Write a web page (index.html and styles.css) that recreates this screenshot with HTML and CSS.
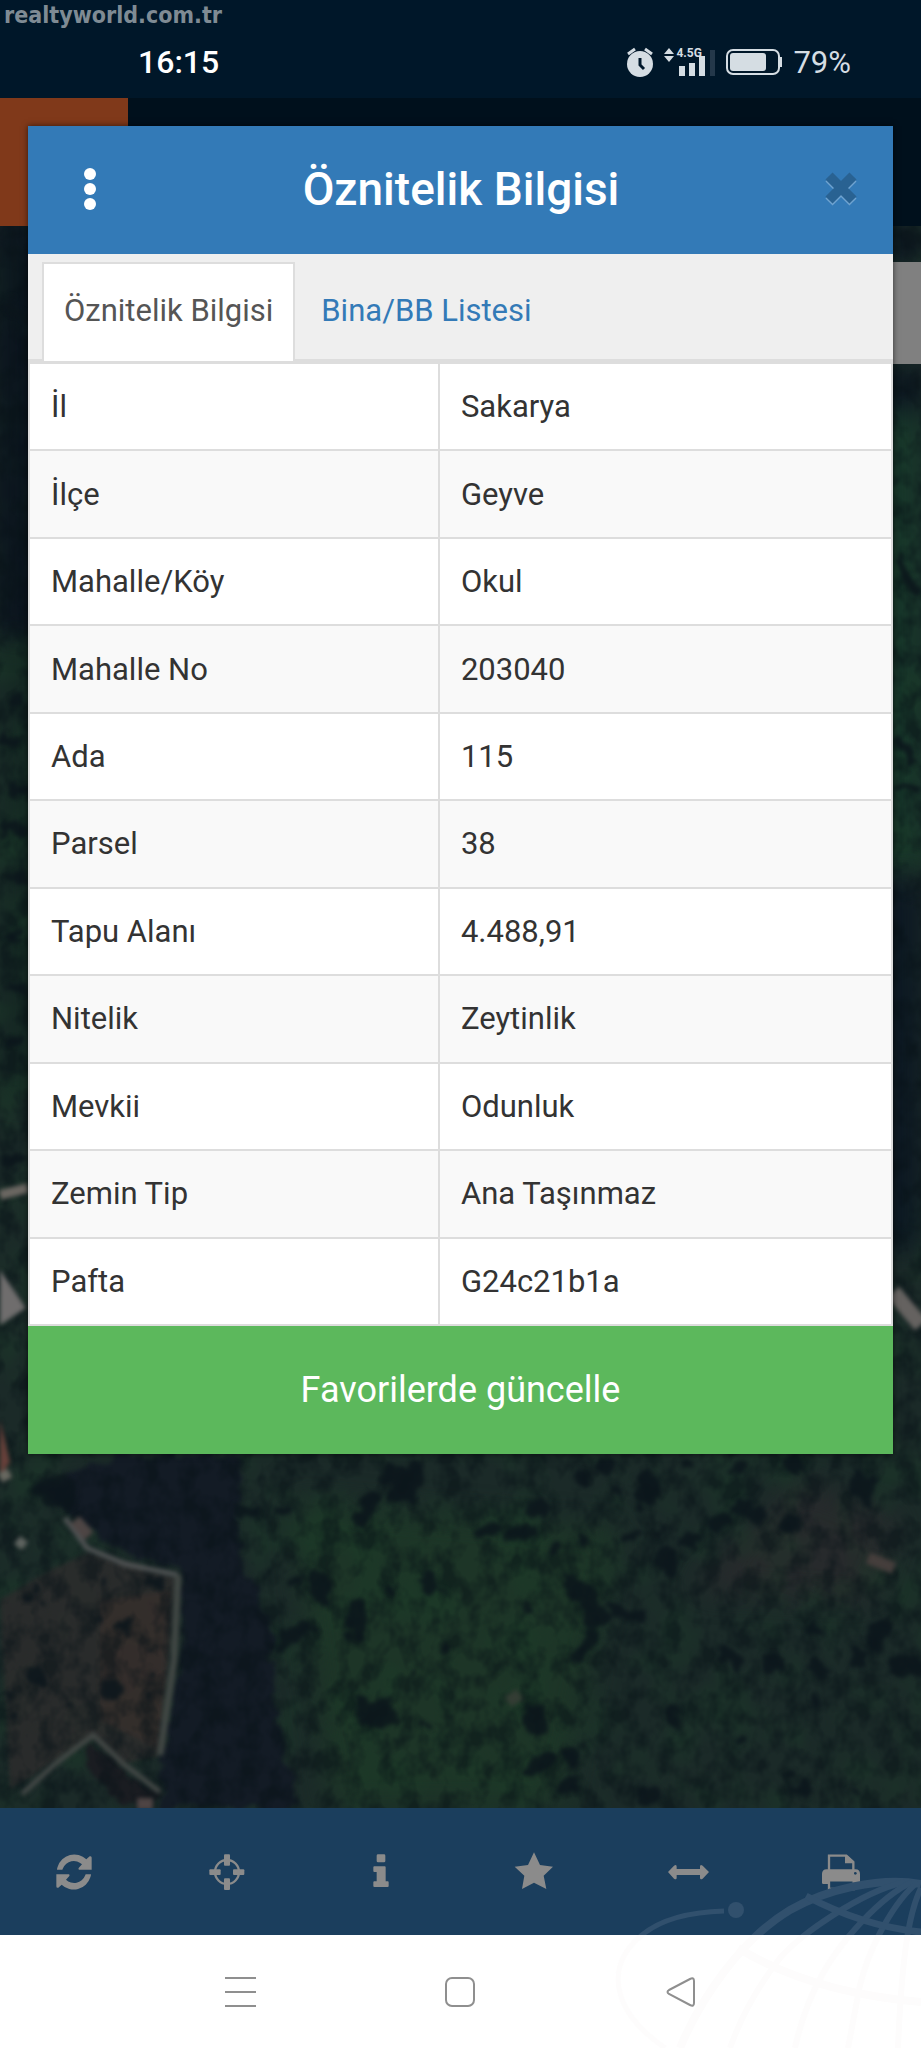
FILE: index.html
```html
<!DOCTYPE html>
<html lang="tr">
<head>
  <meta charset="UTF-8" />
  <meta name="viewport" content="width=device-width, initial-scale=1" />
  <title>Öznitelik Bilgisi</title>
  <link rel="stylesheet" href="styles.css">
</head>
<body>
  <div class="durum">
    <span class="site">realtyworld.com.tr</span>
    <span class="saat">16:15</span>
    <div class="durum-sag">
      <svg width="28" height="30" viewBox="0 0 28 30">
        <circle cx="14" cy="17" r="13" fill="#d5dde3"/>
        <path d="M2 7l7-5M26 7l-7-5" stroke="#d5dde3" stroke-width="3"/>
        <path d="M14 11v7l4 4" fill="none" stroke="#00182b" stroke-width="3"/>
      </svg>
      <div class="sinyal">
        <svg width="52" height="28" viewBox="0 0 52 28">
          <path d="M0 6l5-6 5 6zM0 8l5 6 5-6z" fill="#d5dde3"/>
          <path d="M15 18h6v10h-6zM25 15h6v13h-6zM35 8h6v20h-6z" fill="#d5dde3"/>
          <path d="M46 2h5v26h-5z" fill="#24384a"/>
        </svg>
        <span class="sebeke">4.5G</span>
      </div>
      <svg width="57" height="28" viewBox="0 0 57 28">
        <rect x="1" y="2" width="52" height="24" rx="6" fill="none" stroke="#d5dde3" stroke-width="2"/>
        <rect x="4" y="5" width="36" height="18" rx="3" fill="#d5dde3"/>
        <path d="M54 9h2v10h-2z" fill="#d5dde3"/>
      </svg>
      <span class="pil">79%</span>
    </div>
  </div>

  <main class="harita">
    <svg class="uydu" viewBox="0 98 921 1710" preserveAspectRatio="xMidYMid slice" color-interpolation-filters="sRGB">
      <defs>
        <filter id="doku" x="0" y="0" width="100%" height="100%">
          <feTurbulence type="fractalNoise" baseFrequency="0.05 0.04" numOctaves="3" seed="8"/>
          <feColorMatrix values="0 0 0 0 0.03  0 0 0 0 0.07  0 0 0 0 0.09  3 0 0 0 -1.2"/>
        </filter>
        <filter id="isik" x="0" y="0" width="100%" height="100%">
          <feTurbulence type="fractalNoise" baseFrequency="0.02 0.016" numOctaves="3" seed="21"/>
          <feColorMatrix values="0 0 0 0 0.11  0 0 0 0 0.24  0 0 0 0 0.16  0 2.4 0 0 -1"/>
        </filter>
        <filter id="yumusak"><feGaussianBlur stdDeviation="2"/></filter>
        <filter id="agac">
          <feTurbulence type="fractalNoise" baseFrequency="0.06" numOctaves="2" seed="4" result="n"/>
          <feDisplacementMap in="SourceGraphic" in2="n" scale="22" xChannelSelector="R" yChannelSelector="G"/>
          <feGaussianBlur stdDeviation="2"/>
        </filter>
        <filter id="genis"><feGaussianBlur stdDeviation="14"/></filter>
      </defs>
      <rect y="98" width="921" height="1710" fill="#1b2a28"/>
      <g filter="url(#genis)">
        <path d="M0 226H60V630H0zM870 226H921V262H870zM880 364H921V410H880z" fill="#0b1420"/>
        <path d="M0 630H50V1100H0z" fill="#152823"/>
        <path d="M880 410H921V870H880z" fill="#17382a"/>
        <path d="M290 1500L620 1530 560 1808H330z" fill="#1d3527"/>
        <path d="M800 1480L900 1520 870 1600 690 1590z" fill="#272a2c"/>
      </g>
      <rect y="98" width="921" height="1710" filter="url(#isik)" opacity="0.45"/>
      <g filter="url(#genis)">
        <path d="M0 200H28V640H0z" fill="#0b141d"/>
        <path d="M880 880H921V1250H880z" fill="#0c1722"/>
      </g>
      <g filter="url(#yumusak)">
        <path d="M50 1570L90 1552 178 1578 160 1755 120 1765 93 1737 10 1790 0 1600z" fill="#2b2c2b" opacity="0.85"/>
        <path d="M100 1600L170 1590 160 1750 100 1720z" fill="#372f2c" opacity="0.7"/>
      </g>
      <g filter="url(#agac)">
        <path d="M40 1490L120 1454H240L238 1550 270 1620 275 1700 298 1808H160L162 1755 182 1640 182 1570 130 1555 90 1530z" fill="#131b25"/>
        <path d="M90 1744L160 1800 125 1808 85 1760z" fill="#1a1c21"/>
      </g>
      <rect y="98" width="921" height="1710" filter="url(#doku)" opacity="0.5"/>
      <g class="agaclar" filter="url(#agac)" fill="none" stroke="#0b151b" stroke-linecap="round" opacity="0.85">
        <path stroke-width="8" d="M35 1587h0M29 1597h0M42 1603h0M107 1584h0M98 1621h0M152 1652h0M149 1674h0M148 1696h0M67 1707h0M12 1714h0M5 1693h0M140 1757h0M412 1675h0M445 1650h0M424 1724h0M530 1609h0M617 1492h0M661 1528h0M815 1703h0M743 1741h0M787 1775h0M853 1795h0"/>
        <path stroke-width="14" d="M155 1582h0M124 1624h0M296 1580h0M392 1595h0M360 1625h0M240 1510h8M285 1508h0M555 1545h0M582 1542h0M632 1538h0M592 1632l-12 25M813 1630h0M814 1699h0M795 1790h12M562 1784h10M642 1797h8M688 1465h0M740 1467h0M790 1463h6M728 1655l10 6M673 1715v6M528 1770l22-10M360 1620l-4 12M615 1610l20 6"/>
        <path stroke-width="20" d="M38 1677h0M109 1690h6M320 1580v14M432 1583h-4M356 1610v16M305 1630l-20 12M489 1530h0M515 1532h10M537 1510h0M580 1480h0M605 1468h0M648 1482l-3 16M667 1554l-2 8M692 1542h0M717 1524h4M744 1508l14 6M790 1524h2M858 1478l8 16M573 1582l14 20M596 1615h2M770 1664h6M818 1668h0M856 1659h4M900 1665h14M880 1630l-4 12M530 1712l8 16M570 1755h4M370 1500l-6 14M390 1478l20-4"/>
        <path stroke-width="32" d="M370 1714h12M404 1488l8-10M60 1496l-8-6"/>
        <path stroke-width="10" d="M8 300l18 20M12 700h10M4 740h14M14 790h8M6 830h12M18 880h6M8 935h14M12 990h10M8 1040h12M4 1160h14M900 560l12 30M900 740l12 20M900 790h10"/>
      </g>
      <g filter="url(#yumusak)" fill="none" stroke="#4f5253" stroke-width="5">
        <path d="M65 1518L87 1548 125 1564 178 1575"/>
        <path d="M178 1575L174 1660 160 1755" stroke-width="7" stroke="#414744"/>
        <path d="M22 1794L55 1764 93 1735 125 1765 160 1792" stroke="#434846"/>
        <path d="M75 1520l14 16" stroke-width="12" stroke="#4d4544"/>
        <path d="M0 1195L28 1188" stroke-width="10" stroke="#6b6762"/>
        <path d="M893 1292L921 1325" stroke-width="16" stroke="#656260"/>
        <path d="M0 1270L26 1308 0 1325z" fill="#6f6d6d" stroke="none"/>
        <path d="M0 1420L10 1462 0 1476z" fill="#67403a" stroke="none"/>
        <path d="M0 1478l10-5" stroke-width="10" stroke="#686860"/>
        <path d="M17 1540l8 6" stroke-width="10" stroke="#5f6460"/>
        <path d="M868 1558l26 10" stroke-width="12" stroke="#453e3c"/>
        <path d="M508 1702l12-8" stroke-width="12" stroke="#343d34"/>
        <path d="M137 1804h16" stroke-width="12" stroke="#4e4444"/>
      </g>
    </svg>
    <div class="ust-serit"></div>
    <div class="yan-kutu"></div>

    <section class="pencere">
      <header class="baslik">
        <button class="menu" aria-label="Menü">
          <svg width="14" height="44" viewBox="0 0 14 44" fill="#fff">
            <circle cx="7" cy="7" r="6"/><circle cx="7" cy="22" r="6"/><circle cx="7" cy="37" r="6"/>
          </svg>
        </button>
        <h1>Öznitelik Bilgisi</h1>
        <button class="kapat" aria-label="Kapat">
          <svg width="32" height="34" viewBox="0 0 32 34" fill="none" stroke-width="10">
            <path d="M4 6l24 24M28 6L4 30" stroke="#6fa3d0"/>
            <path d="M4 4l24 24M28 4L4 28" stroke="#296292"/>
          </svg>
        </button>
      </header>
      <nav class="sekmeler">
        <a href="#bilgi" class="sekme aktif">Öznitelik Bilgisi</a>
        <a href="#liste" class="sekme">Bina/BB Listesi</a>
      </nav>
      <table class="bilgi" id="bilgi">
        <tr><td>İl</td><td>Sakarya</td></tr>
        <tr><td>İlçe</td><td>Geyve</td></tr>
        <tr><td>Mahalle/Köy</td><td>Okul</td></tr>
        <tr><td>Mahalle No</td><td>203040</td></tr>
        <tr><td>Ada</td><td>115</td></tr>
        <tr><td>Parsel</td><td>38</td></tr>
        <tr><td>Tapu Alanı</td><td>4.488,91</td></tr>
        <tr><td>Nitelik</td><td>Zeytinlik</td></tr>
        <tr><td>Mevkii</td><td>Odunluk</td></tr>
        <tr><td>Zemin Tip</td><td>Ana Taşınmaz</td></tr>
        <tr><td>Pafta</td><td>G24c21b1a</td></tr>
      </table>
      <button class="favori">Favorilerde güncelle</button>
    </section>
  </main>

  <footer class="alt">
    <div class="araclar">
      <button aria-label="Yenile">
        <svg viewBox="160 180 126 126">
          <path id="ok" d="M172 236Q172 232 174 227A52 52 0 0 1 260 205L270 196Q276 194 276 200V236H238Q235 234 237 231L247 220A35 35 0 0 0 190 232L188 236Z"/>
          <use href="#ok" transform="rotate(180 223 243)"/>
        </svg>
      </button>
      <button aria-label="Konum">
        <svg viewBox="621 180 126 126">
          <circle cx="684" cy="243" r="36" fill="none" stroke="#8b8b8b" stroke-width="7"/>
          <rect x="675" y="190" width="18" height="34" rx="3"/>
          <rect x="675" y="262" width="18" height="35" rx="3"/>
          <rect x="631" y="235" width="34" height="17" rx="3"/>
          <rect x="702" y="235" width="34" height="17" rx="3"/>
        </svg>
      </button>
      <button aria-label="Bilgi">
        <svg viewBox="1081 180 126 126">
          <rect x="1131" y="190" width="26" height="24" rx="4"/>
          <path d="M1124 226H1155Q1158 226 1158 229V271H1164Q1167 271 1167 274V285Q1167 288 1164 288H1124Q1121 288 1121 285V274Q1121 271 1124 271H1131V243H1124Q1121 243 1121 240V229Q1121 226 1124 226Z"/>
        </svg>
      </button>
      <button aria-label="Favoriler">
        <svg viewBox="161 180 126 126">
          <path d="M224 184L242 222 281 227 253 254 261 294 224 275 188 294 195 254 166 227 206 222Z"/>
        </svg>
      </button>
      <button aria-label="Ölçüm">
        <svg viewBox="621 180 126 126">
          <path d="M624 243L642 224Q650 219 650 227V234H720V227Q720 219 728 224L747 243 728 263Q720 268 720 260V252H650V260Q650 268 642 263Z"/>
        </svg>
      </button>
      <button aria-label="Yazdır">
        <svg viewBox="1083 180 126 126">
          <path d="M1110 238V194H1162L1183 213V238M1110 268H1184V294H1110Z" fill="none" stroke="#8b8b8b" stroke-width="7"/>
          <path d="M1158 194V217H1183V210L1166 194Z"/>
          <path d="M1089 275V249Q1089 235 1103 235H1190Q1203 235 1203 249V275Q1203 279 1199 279H1184V270H1108V279H1093Q1089 279 1089 275Z"/>
          <circle cx="1189" cy="247" r="4" fill="#1b3e5d"/>
        </svg>
      </button>
    </div>
    <div class="telefon">
      <button aria-label="Son uygulamalar">
        <svg width="32" height="32" viewBox="0 0 32 32"><path d="M1 2h31M1 16h31M1 30h31"/></svg>
      </button>
      <button aria-label="Ana ekran">
        <svg width="32" height="32" viewBox="0 0 32 32"><rect x="2" y="2" width="28" height="28" rx="6"/></svg>
      </button>
      <button aria-label="Geri">
        <svg width="32" height="32" viewBox="0 0 32 32"><path d="M4 14L25 3Q29 1 29 5V27Q29 31 25 29L4 18Q1 16 4 14Z"/></svg>
      </button>
    </div>
    <svg class="kure" width="321" height="178" viewBox="600 1870 321 178" fill="none">
      <defs>
        <clipPath id="ustte"><rect x="600" y="1870" width="321" height="65"/></clipPath>
        <clipPath id="altta"><rect x="600" y="1935" width="321" height="113"/></clipPath>
        <g id="cizgiler">
          <path stroke-width="5" d="M724 1911C690 1912 660 1920 642 1935C605 1965 610 2010 665 2048"/>
          <path stroke-width="8" d="M921 1884C880 1876 825 1890 790 1910C740 1940 700 2000 680 2048"/>
          <path stroke-width="6" d="M905 1882C860 1892 800 1935 780 1958C755 1990 740 2020 730 2048"/>
          <path stroke-width="6" d="M912 1882C880 1897 840 1942 822 1975C808 2000 800 2025 795 2048"/>
          <path stroke-width="6" d="M918 1882C895 1900 870 1945 860 1985L848 2048"/>
          <path stroke-width="6" d="M921 1888C910 1910 902 1950 898 2048"/>
          <path stroke-width="7" d="M806 1896C840 1914 880 1928 921 1932"/>
          <path stroke-width="8" d="M738 1948C790 1980 850 1996 921 2002"/>
        </g>
      </defs>
      <g clip-path="url(#ustte)">
        <use href="#cizgiler" stroke="#31506d"/>
        <circle cx="736" cy="1910" r="8" fill="#31506d"/>
      </g>
      <use href="#cizgiler" clip-path="url(#altta)" stroke="#fdfcfc"/>
    </svg>
  </footer>
</body>
</html>
```
FILE: styles.css
```css
* {
  box-sizing: border-box;
}
body {
  margin: 0;
  min-height: 100vh;
  display: flex;
  flex-direction: column;
  font-family: Roboto, "Liberation Sans", sans-serif;
  font-size: 31px;
  color: #333;
}
button {
  padding: 0;
  border: none;
  background: none;
  font-family: inherit;
  cursor: pointer;
}
svg {
  display: block;
}

/* durum çubuğu */
.durum {
  position: relative;
  height: 98px;
  padding: 26px 70px 0 138px;
  display: flex;
  align-items: center;
  justify-content: space-between;
  background: #001729;
}
.site {
  position: absolute;
  top: 0;
  left: 4px;
  font: bold 23px/30px "DejaVu Sans Condensed", "DejaVu Sans", sans-serif;
  color: #7f8b94;
}
.saat {
  font-size: 32px;
  font-weight: 500;
  color: #fff;
}
.durum-sag {
  display: flex;
  align-items: center;
  gap: 10px;
}
.sinyal {
  position: relative;
}
.sebeke {
  position: absolute;
  top: -1px;
  left: 12px;
  font: bold 12px/12px Roboto, sans-serif;
  color: #d5dde3;
}
.pil {
  font-size: 31px;
  color: #d5dde3;
}

/* harita */
.harita {
  position: relative;
  flex: 1;
  padding: 28px 28px 354px;
  overflow: hidden;
}
.uydu {
  position: absolute;
  top: 0;
  left: 0;
  width: 100%;
  height: 100%;
}
.ust-serit {
  position: absolute;
  top: 0;
  left: 0;
  right: 0;
  height: 128px;
  background: #00101c;
  border-left: 128px solid #80391a;
}
.yan-kutu {
  position: absolute;
  top: 164px;
  right: 0;
  width: 80px;
  height: 102px;
  background: #808080;
}

/* pencere */
.pencere {
  position: relative;
  background: #fff;
  box-shadow: 0 0 6px rgba(0, 0, 0, 0.6);
}
.baslik {
  height: 128px;
  padding: 0 36px 2px 55px;
  display: flex;
  align-items: center;
  justify-content: space-between;
  background: #337ab7;
}
.baslik h1 {
  margin: 0;
  font-size: 46px;
  font-weight: 500;
  color: #fff;
}
.sekmeler {
  height: 108px;
  padding: 8px 14px 0;
  display: flex;
  gap: 4px;
  background: #efefef;
  border-bottom: 3px solid #ddd;
}
.sekme {
  height: 99px;
  padding: 0 20px;
  border: 2px solid transparent;
  border-bottom: none;
  line-height: 94px;
  color: #337ab7;
  text-decoration: none;
}
.sekme.aktif {
  background: #fff;
  border-color: #ddd;
  color: #555;
}
.bilgi {
  width: 100%;
  height: 964px;
  border-collapse: collapse;
}
.bilgi td {
  padding: 0 21px;
  border: 2px solid #ddd;
}
.bilgi td:first-child {
  width: 47.5%;
}
.bilgi tr:nth-child(even) {
  background: #f9f9f9;
}
.favori {
  display: block;
  width: 100%;
  height: 128px;
  background: #5cb85c;
  color: #fff;
  font-size: 36px;
}

/* alt çubuklar */
.alt {
  position: relative;
}
.araclar {
  height: 127px;
  display: grid;
  grid-template-columns: repeat(6, 1fr);
  background: #1b3e5d;
}
.araclar button {
  padding-right: 6px;
  display: flex;
  align-items: center;
  justify-content: center;
}
.araclar svg {
  width: 42px;
  height: 42px;
  fill: #8b8b8b;
  overflow: visible;
}
.telefon {
  height: 113px;
  padding: 0 130px;
  display: grid;
  grid-template-columns: repeat(3, 1fr);
  background: #fff;
}
.telefon button {
  display: flex;
  align-items: center;
  justify-content: center;
}
.telefon svg {
  fill: none;
  stroke: #8f8f8f;
  stroke-width: 2;
}
.kure {
  position: absolute;
  right: 0;
  bottom: 0;
  pointer-events: none;
}
```
